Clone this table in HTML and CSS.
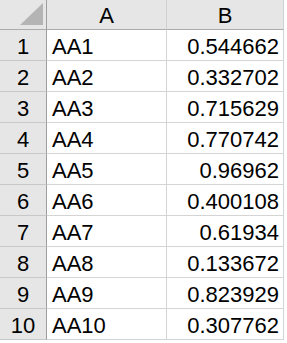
FILE: index.html
```html
<!DOCTYPE html>
<html>
<head>
<meta charset="utf-8">
<link rel="stylesheet" href="styles.css">
</head>
<body>
<div class="sheet">
  <div class="corner"><svg class="tri" width="23" height="22" viewBox="0 0 23 22"><polygon points="23,0 23,22 0,22" fill="#b4b4b4"/></svg></div>
  <div class="colhead">A</div>
  <div class="colhead">B</div>

  <div class="rowhead">1</div><div class="cell text">AA1</div><div class="cell num">0.544662</div>
  <div class="rowhead">2</div><div class="cell text">AA2</div><div class="cell num">0.332702</div>
  <div class="rowhead">3</div><div class="cell text">AA3</div><div class="cell num">0.715629</div>
  <div class="rowhead">4</div><div class="cell text">AA4</div><div class="cell num">0.770742</div>
  <div class="rowhead">5</div><div class="cell text">AA5</div><div class="cell num">0.96962</div>
  <div class="rowhead">6</div><div class="cell text">AA6</div><div class="cell num">0.400108</div>
  <div class="rowhead">7</div><div class="cell text">AA7</div><div class="cell num">0.61934</div>
  <div class="rowhead">8</div><div class="cell text">AA8</div><div class="cell num">0.133672</div>
  <div class="rowhead">9</div><div class="cell text">AA9</div><div class="cell num">0.823929</div>
  <div class="rowhead">10</div><div class="cell text">AA10</div><div class="cell num">0.307762</div>
</div>
</body>
</html>
```
FILE: styles.css
```css
html, body {
  margin: 0;
  padding: 0;
  background: #ffffff;
}
body {
  font-family: "Liberation Sans", Arial, sans-serif;
  font-size: 22px;
  color: #000;
  width: 287px;
  height: 343px;
  overflow: hidden;
}
.sheet {
  display: grid;
  grid-template-columns: 47px 120px 117px;
  grid-template-rows: 30px repeat(10, 31px);
}
.sheet > div {
  box-sizing: border-box;
  white-space: nowrap;
}
.corner {
  background: #e6e6e6;
  border-right: 1px solid #9e9e9e;
  border-bottom: 1px solid #ababab;
  display: flex;
  justify-content: flex-end;
  align-items: flex-end;
  padding: 0 3px 4px 0;
}
.tri {
  display: block;
}
.colhead {
  background: #e6e6e6;
  border-right: 1px solid #d2d2d2;
  border-bottom: 1px solid #ababab;
  text-align: center;
  line-height: 29px;
  padding-top: 1px;
}
.rowhead {
  background: #e6e6e6;
  border-right: 1px solid #9e9e9e;
  border-bottom: 1px solid #c8c8c8;
  text-align: center;
  line-height: 30px;
  padding-top: 2px;
}
.cell {
  border-right: 1px solid #d4d4d4;
  border-bottom: 1px solid #d4d4d4;
  line-height: 30px;
  padding-top: 2px;
}
.text {
  padding-left: 5px;
}
.num {
  text-align: right;
  padding-right: 4px;
}
```
